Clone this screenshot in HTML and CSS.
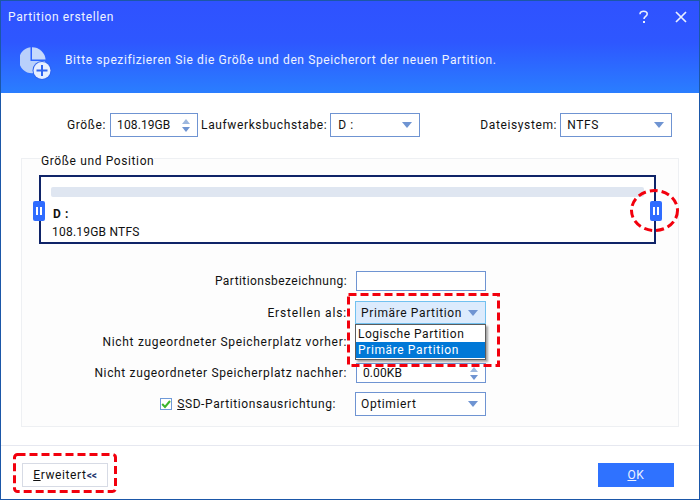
FILE: index.html
```html
<!DOCTYPE html>
<html lang="de">
<head>
<meta charset="utf-8">
<title>Partition erstellen</title>
<link rel="stylesheet" href="styles.css">
</head>
<body>
<div class="window">
  <header class="header">
    <div class="titlebar">
      <span class="title">Partition erstellen</span>
      <span class="win-btns">
        <svg class="win-icon" viewBox="0 0 12 14" width="12" height="14"><path d="M2 4.2C2 2.3 3.7 1.2 5.6 1.2 7.6 1.2 9.2 2.3 9.2 4 9.2 6.3 6 6.3 6 9" fill="none" stroke="#e9efff" stroke-width="1.6"/><rect x="5" y="11" width="2" height="2" fill="#e9efff"/></svg>
        <svg class="win-icon" viewBox="0 0 12 12" width="12" height="12"><path d="M1 1L11 11M11 1L1 11" fill="none" stroke="#e9efff" stroke-width="1.7"/></svg>
      </span>
    </div>
    <div class="banner">
      <svg class="banner-icon" viewBox="0 0 32 33" width="32" height="33">
        <path d="M10.5 0.3A13 13 0 1 0 25 14H10.5Z" fill="#b9d0fb"/>
        <path d="M12 0.2V12.5H25.6A13.5 13.5 0 0 0 12 0.2Z" fill="#c6d9fc"/>
        <circle cx="22" cy="23.5" r="9.5" fill="#2f63f0"/>
        <circle cx="22" cy="23.5" r="8.5" fill="#e6eeff"/>
        <path d="M22 18V29M16.5 23.5H27.5" stroke="#2f63f0" stroke-width="2"/>
      </svg>
      <span class="banner-text">Bitte spezifizieren Sie die Größe und den Speicherort der neuen Partition.</span>
    </div>
  </header>

  <main class="content">
    <div class="top-row">
      <span class="label">Größe:</span>
      <div class="field size-field"><span class="num">108.19GB</span><span class="spin"><i class="up"></i><i class="down"></i></span></div>
      <span class="label">Laufwerksbuchstabe:</span>
      <div class="field letter-field"><span>D :</span><i class="arrow"></i></div>
      <span class="label fs-label">Dateisystem:</span>
      <div class="field fs-field"><span>NTFS</span><i class="arrow"></i></div>
    </div>

    <section class="group">
      <div class="group-title">Größe und Position</div>
      <div class="disk">
        <div class="bar"></div>
        <div class="disk-letter">D :</div>
        <div class="disk-size">108.19GB NTFS</div>
        <span class="handle handle-left"><b></b><b></b></span>
        <span class="handle handle-right"><b></b><b></b></span>
      </div>

      <div class="form">
        <div class="row row-name">
          <span class="label">Partitionsbezeichnung:</span>
          <div class="field wide empty"></div>
        </div>
        <div class="row row-type">
          <span class="label">Erstellen als:</span>
          <div class="field wide open"><span>Primäre Partition</span><i class="arrow"></i></div>
        </div>
        <div class="row row-before">
          <span class="label">Nicht zugeordneter Speicherplatz vorher:</span>
          <div class="field wide"></div>
        </div>
        <div class="row row-after">
          <span class="label">Nicht zugeordneter Speicherplatz nachher:</span>
          <div class="field wide"><span class="num">0.00KB</span><span class="spin"><i class="up"></i><i class="down"></i></span></div>
        </div>
        <div class="row row-ssd">
          <svg class="check" viewBox="0 0 12 12" width="12" height="12"><rect x="0.5" y="0.5" width="11" height="11" fill="#fff" stroke="#6f9ad8"/><path d="M2.2 6L5 9 10 3" fill="none" stroke="#3cb52c" stroke-width="2"/></svg>
          <span class="label ssd-label"><u>S</u>SD-Partitionsausrichtung:</span>
          <div class="field wide"><span>Optimiert</span><i class="arrow"></i></div>
        </div>
      </div>
    </section>
  </main>

  <footer class="footer">
    <button class="btn btn-adv"><u>E</u>rweitert<small class="chev">&lt;&lt;</small></button>
    <button class="btn btn-ok"><u>O</u>K</button>
  </footer>

  <ul class="dropdown">
    <li>Logische Partition</li>
    <li class="selected">Primäre Partition</li>
  </ul>

  <svg class="mark mark-type" viewBox="0 0 153 74" width="153" height="74"><rect x="1.5" y="1.5" width="150" height="71" /></svg>
  <svg class="mark mark-adv" viewBox="0 0 104 40" width="104" height="40"><rect x="1.5" y="1.5" width="101" height="37" rx="3"/></svg>
  <svg class="mark mark-handle" viewBox="0 0 49 43" width="49" height="43"><ellipse cx="24.5" cy="21.5" rx="23" ry="20"/></svg>
</div>
</body>
</html>
```
FILE: styles.css
```css
* { box-sizing: border-box; }
html, body { margin: 0; padding: 0; }
body { width: 700px; height: 500px; overflow: hidden; background: #fff; font-family: Roboto, "Noto Sans", sans-serif; font-size: 12px; letter-spacing: 0.62px; color: #111; }

.window { position: relative; width: 700px; height: 500px; display: flex; flex-direction: column; border: 1px solid #1b57a8; background: #fff; }

.header { height: 92px; background: linear-gradient(180deg, #2f52ff 0%, #2e57ff 45%, #2a7eff 100%); color: #eef3ff; display: flex; flex-direction: column; }
.titlebar { display: flex; justify-content: space-between; align-items: center; height: 32px; padding: 0 12px 0 7px; }
.win-btns { display: flex; align-items: center; gap: 25px; }
.banner { display: flex; align-items: center; gap: 13px; padding: 14px 0 0 19px; }
.banner-text { letter-spacing: 0.61px; margin-top: -7px; }

.content { flex: 1; display: flex; flex-direction: column; }

.top-row { display: flex; align-items: center; height: 24px; margin-top: 20px; padding-left: 66px; }
.label { white-space: nowrap; }
.field { display: flex; align-items: center; justify-content: space-between; height: 24px; border: 1px solid #6f94d2; padding: 0 6px; background: #fff; }
.num { letter-spacing: 0.1px; }
.size-field { width: 88px; margin: 0 3px 0 4px; }
.letter-field { width: 90px; margin-left: 3px; padding-left: 7px; }
.fs-label { margin-left: 60px; }
.fs-field { width: 112px; margin-left: 3px; }

.arrow { width: 0; height: 0; border-left: 5px solid transparent; border-right: 5px solid transparent; border-top: 6px solid #6f94d2; margin-right: 1px; }
.spin { display: flex; flex-direction: column; gap: 3px; margin-right: 1px; }
.up, .down { display: block; width: 0; height: 0; border-left: 4px solid transparent; border-right: 4px solid transparent; }
.up { border-bottom: 5px solid #9db7de; }
.down { border-top: 5px solid #6f94d2; }

.group { position: relative; margin: 21px 20px 0 20px; height: 269px; border: 1px solid #eef0f3; background: #fdfdfd; padding: 16px 22px 0 17px; }
.group-title { position: absolute; top: -5px; left: 19px; background: #fff; line-height: 14px; }
.disk { position: relative; height: 69px; border: 2px solid #0f2468; padding: 10px 10px 0 10px; background: #fff; }
.bar { height: 10px; background: #dfe6f1; border-radius: 2px; }
.disk-letter { font-weight: 700; margin: 10px 0 0 2px; line-height: 14px; }
.disk-size { margin: 4px 0 0 1px; line-height: 14px; letter-spacing: 0.22px; }
.handle { position: absolute; top: 24px; width: 12px; height: 20px; background: #2f6cff; border-radius: 2px; display: flex; justify-content: center; align-items: center; gap: 2px; }
.handle b { display: block; width: 2px; height: 8px; background: #fff; }
.handle-left { left: -8px; }
.handle-right { right: -8px; }

.form { display: flex; flex-direction: column; margin-top: 27px; }
.row { display: flex; align-items: center; justify-content: flex-end; padding-right: 170px; }
.row .label { margin-right: 9px; }
.wide { width: 130px; }
.empty { height: 20px; }
.row-name .label { letter-spacing: 0.44px; }
.row-type { margin-top: 10px; }
.row-type .label { letter-spacing: 0.85px; }
.row-type .field { height: 23px; width: 131px; margin-left: -1px; padding-left: 5px; }
.row-before { margin-top: 8px; }
.row-before .label { letter-spacing: 0.69px; }
.row-before .field { height: 20px; }
.row-after { margin-top: 11px; }
.row-after .label { letter-spacing: 0.64px; }
.row-after .field { height: 20px; }
.row-ssd { margin-top: 9px; }
.row-ssd .field { height: 24px; width: 131px; padding-left: 5px; }
.ssd-label { margin-left: 5px; margin-right: 19px !important; letter-spacing: 0.6px; }
.check { flex: none; }
.open { background: #dcebfd; border-color: #72c1f0; }

.footer { height: 54px; border-top: 1px solid #e6e8f0; display: flex; justify-content: space-between; align-items: flex-start; padding: 17px 25px 0 21px; }
.btn { height: 24px; font: inherit; letter-spacing: inherit; cursor: pointer; }
.btn-adv { width: 86px; background: #fff; border: 1px solid #d7dbe5; color: #111; padding: 0; }
.chev { font-size: 10px; font-weight: 700; letter-spacing: 0; color: #23356b; }
.btn-ok { width: 76px; background: #2f72ff; border: none; color: #eef3ff; }

.dropdown { position: absolute; left: 354px; top: 323px; width: 131px; margin: 0; padding: 1px 0; list-style: none; background: #fff; border: 1px solid #5c5c5c; box-shadow: 2px 2px 2px rgba(0,0,0,.35); z-index: 2; letter-spacing: 0.52px; }
.dropdown li { height: 16px; line-height: 16px; padding-left: 2px; }
.dropdown .selected { background: #0078d7; color: #fff; letter-spacing: 0.62px; }

.mark { position: absolute; z-index: 3; fill: none; stroke: #f2000d; stroke-width: 3; stroke-dasharray: 8 4; }
.mark-type { left: 346px; top: 292px; }
.mark-adv { left: 12px; top: 452px; }
.mark-handle { left: 629px; top: 188px; }
```
